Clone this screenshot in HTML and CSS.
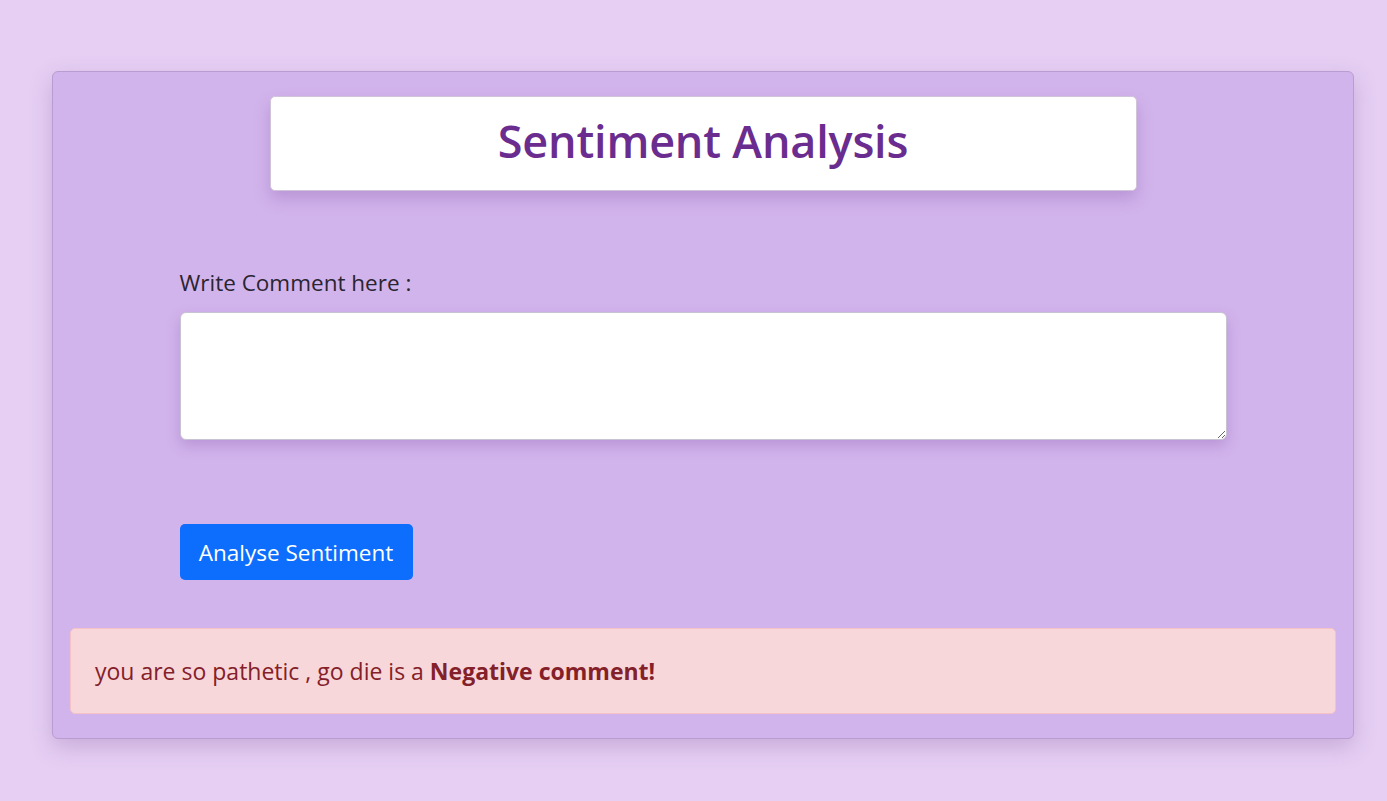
FILE: index.html
```html
<!DOCTYPE html>
<html lang="en">
<head>
<meta charset="utf-8">
<title>Sentiment Analysis</title>
<link rel="stylesheet" href="styles.css">
</head>
<body>
  <main class="card">
    <div class="title-box">
      <h1 class="title">Sentiment Analysis</h1>
    </div>
    <form class="form">
      <label class="label" for="comment">Write Comment here :</label>
      <textarea class="comment" id="comment"></textarea>
      <button type="button" class="btn">Analyse Sentiment</button>
    </form>
    <div class="alert">you are so pathetic , go die is a <strong>Negative comment!</strong></div>
  </main>
</body>
</html>
```
FILE: styles.css
```css
* { box-sizing: border-box; }
html, body { margin: 0; }
body {
  background: #e6cff3;
  font-family: "Open Sans", "Noto Sans", sans-serif;
  color: #212529;
  padding: 71px 33px 40px 52px;
  min-height: 801px;
}
.card {
  width: 1302px;
  background: #d2b4ec;
  border: 1px solid #b99dd2;
  border-radius: 6px;
  box-shadow: 0 8px 22px rgba(120, 80, 150, 0.28);
  padding: 24px 17px 24px 17px;
  display: flex;
  flex-direction: column;
  align-items: center;
}
.title-box {
  width: 867px;
  height: 95px;
  background: #fff;
  border: 1px solid #cfc4d8;
  border-radius: 5px;
  box-shadow: 0 8px 16px rgba(110, 60, 150, 0.25);
  display: flex;
  align-items: center;
  justify-content: center;
  padding-bottom: 6px;
}
.title {
  margin: 0;
  font-size: 45px;
  font-weight: 600;
  color: #6a2c8e;
  line-height: 1.2;
  letter-spacing: -0.2px;
}
.form {
  width: 1047px;
  margin-top: 77px;
  display: flex;
  flex-direction: column;
  align-items: flex-start;
}
.label {
  font-size: 22.5px;
  line-height: 30px;
  color: #2a2530;
}
.comment {
  margin-top: 14px;
  width: 1047px;
  height: 128px;
  border: 1px solid #c9c2d2;
  border-radius: 6px;
  background: #fff;
  box-shadow: 0 6px 14px rgba(110, 60, 150, 0.25);
  resize: vertical;
  font-family: inherit;
  font-size: 18px;
}
.btn {
  margin-top: 84px;
  height: 56px;
  width: 233px;
  background: #0d6efd;
  color: #fff;
  border: none;
  border-radius: 5px;
  font-family: inherit;
  font-size: 22.5px;
  padding: 0;
}
.alert {
  margin-top: 48px;
  align-self: stretch;
  height: 86px;
  background: #f8d7da;
  border: 1px solid #f5c2c7;
  border-radius: 5px;
  color: #842029;
  font-size: 23px;
  padding: 0 24px;
  display: flex;
  align-items: center;
  white-space: pre;
}
.alert strong { font-weight: 700; }
```
